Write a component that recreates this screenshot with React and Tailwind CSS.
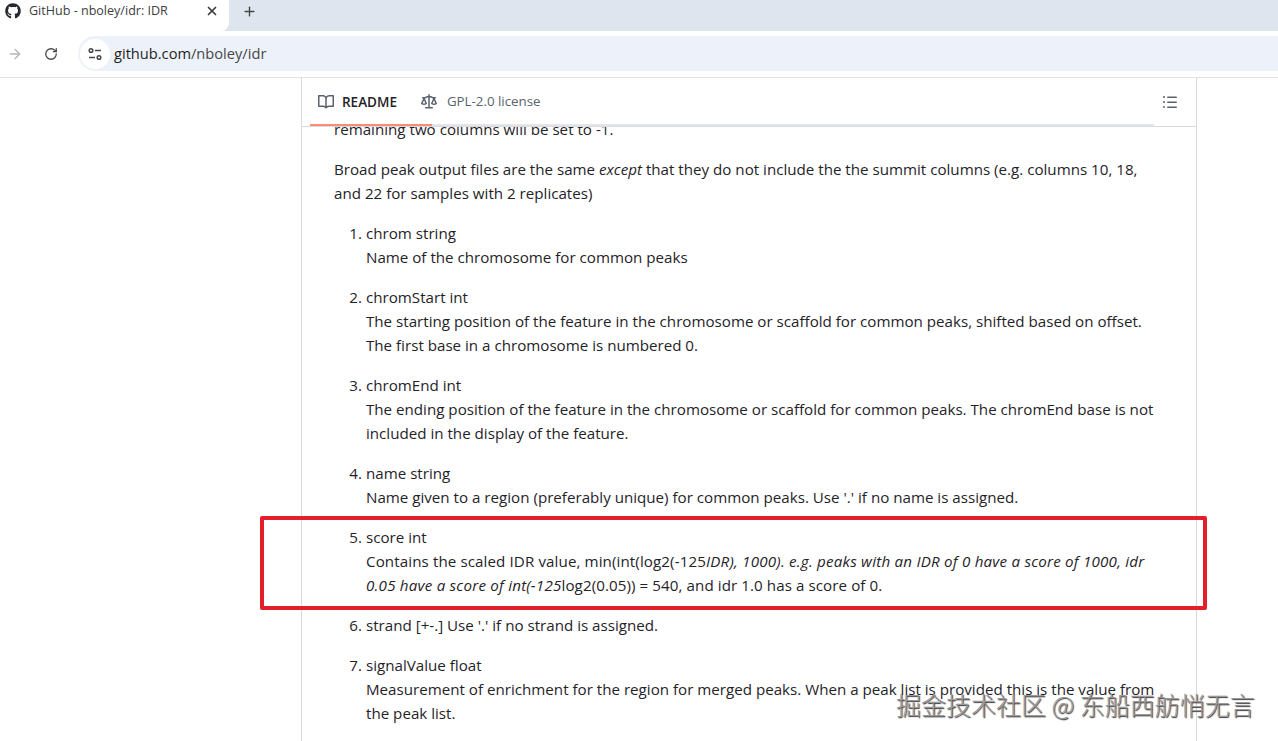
import React from "react";
import { ArrowRight, RotateCw, X, Plus } from "lucide-react";
import { FaGithub } from "react-icons/fa";

const items = [
  { n: "1.", title: "chrom string", body: ["Name of the chromosome for common peaks"] },
  {
    n: "2.",
    title: "chromStart int",
    body: [
      "The starting position of the feature in the chromosome or scaffold for common peaks, shifted based on offset.",
      "The first base in a chromosome is numbered 0.",
    ],
  },
  {
    n: "3.",
    title: "chromEnd int",
    body: [
      "The ending position of the feature in the chromosome or scaffold for common peaks. The chromEnd base is not",
      "included in the display of the feature.",
    ],
  },
  {
    n: "4.",
    title: "name string",
    body: ["Name given to a region (preferably unique) for common peaks. Use '.' if no name is assigned."],
  },
  {
    n: "5.",
    title: "score int",
    body: [
      <>
        <span className="tracking-[0.1px]">Contains the scaled IDR value, min(int(log2(-125</span>
        <em className="tracking-[0.22px]">IDR), 1000). e.g. peaks with an IDR of 0 have a score of 1000, idr</em>
      </>,
      <>
        <em className="tracking-[0.22px]">0.05 have a score of int(-125</em>
        <span className="tracking-[0.08px]">log2(0.05)) = 540, and idr 1.0 has a score of 0.</span>
      </>,
    ],
  },
  { n: "6.", title: "strand [+-.] Use '.' if no strand is assigned.", body: [] },
  {
    n: "7.",
    title: "signalValue float",
    body: [
      "Measurement of enrichment for the region for merged peaks. When a peak list is provided this is the value from",
      "the peak list.",
    ],
  },
];

const Line = ({ children }) => <div className="whitespace-nowrap h-6">{children}</div>;

// octicons used on the readme header
const BookIcon = () => (
  <svg width="16" height="16" viewBox="0 0 16 16" fill="#59636e">
    <path d="M0 1.75A.75.75 0 0 1 .75 1h4.253c1.227 0 2.317.59 3 1.501A3.743 3.743 0 0 1 11.006 1h4.245a.75.75 0 0 1 .75.75v10.5a.75.75 0 0 1-.75.75h-4.507a2.25 2.25 0 0 0-1.591.659l-.622.621a.75.75 0 0 1-1.06 0l-.622-.621A2.25 2.25 0 0 0 5.258 13H.75a.75.75 0 0 1-.75-.75Zm7.251 10.324.004-5.073-.002-2.253A2.25 2.25 0 0 0 5.003 2.5H1.5v9h3.757a3.75 3.75 0 0 1 1.994.574ZM8.755 4.75l-.004 7.322a3.752 3.752 0 0 1 1.992-.572H14.5v-9h-3.495a2.25 2.25 0 0 0-2.25 2.25Z" />
  </svg>
);

const LawIcon = () => (
  <svg width="16" height="16" viewBox="0 0 16 16" fill="#59636e" className="ml-[24px]">
    <path d="M8.75.75V2h.985c.304 0 .603.08.867.231l1.29.736c.038.022.08.033.124.033h2.234a.75.75 0 0 1 0 1.5h-.427l2.111 4.692a.75.75 0 0 1-.154.838l-.53-.53.529.531-.001.002-.002.002-.006.006-.006.005-.01.01-.045.04c-.21.176-.441.327-.686.45C14.556 10.78 13.88 11 13 11a4.498 4.498 0 0 1-2.023-.454 3.544 3.544 0 0 1-.686-.45l-.045-.04-.016-.015-.006-.006-.004-.004v-.001a.75.75 0 0 1-.154-.838L12.178 4.5h-.162c-.305 0-.604-.079-.868-.231l-1.29-.736a.245.245 0 0 0-.124-.033H8.75V13h2.5a.75.75 0 0 1 0 1.5h-6.5a.75.75 0 0 1 0-1.5h2.5V3.5h-.984a.245.245 0 0 0-.124.033l-1.289.737c-.265.15-.564.23-.869.23h-.162l2.112 4.692a.75.75 0 0 1-.154.838l-.53-.53.529.531-.001.002-.002.002-.006.006-.016.015-.045.04c-.21.176-.441.327-.686.45C4.556 10.78 3.88 11 3 11a4.498 4.498 0 0 1-2.023-.454 3.544 3.544 0 0 1-.686-.45l-.045-.04-.016-.015-.006-.006-.004-.004v-.001a.75.75 0 0 1-.154-.838L2.178 4.5H1.75a.75.75 0 0 1 0-1.5h2.234a.249.249 0 0 0 .125-.033l1.288-.737c.265-.15.564-.23.869-.23h.984V.75a.75.75 0 0 1 1.5 0Zm2.945 8.477c.285.135.718.273 1.305.273s1.02-.138 1.305-.273L13 6.327Zm-10 0c.285.135.718.273 1.305.273s1.02-.138 1.305-.273L3 6.327Z" />
  </svg>
);

const OutlineIcon = () => (
  <svg width="16" height="16" viewBox="0 0 16 16" fill="#59636e" className="ml-auto">
    <path d="M5.75 2.5h8.5a.75.75 0 0 1 0 1.5h-8.5a.75.75 0 0 1 0-1.5Zm0 5h8.5a.75.75 0 0 1 0 1.5h-8.5a.75.75 0 0 1 0-1.5Zm0 5h8.5a.75.75 0 0 1 0 1.5h-8.5a.75.75 0 0 1 0-1.5ZM2 14a1 1 0 1 1 0-2 1 1 0 0 1 0 2Zm1-6a1 1 0 1 1-2 0 1 1 0 0 1 2 0ZM2 4a1 1 0 1 1 0-2 1 1 0 0 1 0 2Z" />
  </svg>
);

export default function App() {
  return (
    <div className="relative h-[741px] w-[1278px] overflow-hidden bg-white font-['Open_Sans','Noto_Sans',sans-serif] text-[#1f2328]">
      {/* Tab strip */}
      <div className="flex h-[31px] bg-[#dfe5ee]">
        <div className="flex w-[229px] items-center rounded-br-lg bg-white pb-[9px] pl-[5px] pr-2">
          <FaGithub className="text-[16px] text-[#24292f]" />
          <span className="ml-2 flex-1 whitespace-nowrap text-[12.55px] text-[#3c4043]">GitHub - nboley/idr: IDR</span>
          <X size={14} strokeWidth={3} className="mr-[2px] text-[#3c4043]" />
        </div>
        <div className="flex w-[40px] items-center justify-center pb-[9px]">
          <Plus size={15} strokeWidth={2.2} className="text-[#444746]" />
        </div>
      </div>

      {/* Toolbar */}
      <div className="flex h-[47px] items-center border-b border-[#e3e3e3] bg-white pb-[1px]">
        <div className="flex w-[30px] justify-center">
          <ArrowRight size={16} strokeWidth={2} className="text-[#b4b6b8]" />
        </div>
        <div className="ml-[6px] flex w-[30px] justify-center">
          <RotateCw size={14} strokeWidth={2.2} className="text-[#474747]" />
        </div>
        <div className="ml-[12px] flex h-[35px] flex-1 items-center rounded-l-full bg-[#edf2fa] pl-[2px]">
          <div className="flex h-[30px] w-[30px] items-center justify-center rounded-full bg-white">
            <svg width="16" height="14" viewBox="0 0 16 14" fill="none" stroke="#474747" strokeWidth="1.5">
              <circle cx="4" cy="3.5" r="1.8" />
              <path d="M8 3.5h6" />
              <path d="M2 10.5h6" />
              <circle cx="12" cy="10.5" r="1.8" />
            </svg>
          </div>
          <span className="ml-[4px] text-[14.65px] text-[#1f1f1f]">
            github.com<span className="text-[#474747]">/nboley/idr</span>
          </span>
        </div>
      </div>

      {/* Readme box */}
      <div className="ml-[301px] w-[896px] border-x border-[#d8dbde]">
        <div className="relative flex h-[49px] items-center border-b border-[#d8dbde] pl-[16px] pr-[18px]">
          <BookIcon />
          <span className="ml-[8px] text-[13.5px] font-semibold text-[#1f2328]">README</span>
          <LawIcon />
          <span className="ml-[10px] text-[13.3px] text-[#59636e]">GPL-2.0 license</span>
          <OutlineIcon />
          <div className="absolute bottom-0 left-[8px] h-[2px] w-[122px] bg-[#fd8c73]" />
          <div className="absolute bottom-0 left-[130px] right-[42px] h-[2px] bg-[#e3e5e8]" />
        </div>

        <div className="h-[614px] overflow-hidden pl-[32px] text-[15.15px] leading-6">
          <div className="-mt-[10px]">
            <Line>remaining two columns will be set to -1.</Line>
            <div className="mt-4">
              <Line>
                Broad peak output files are the same <em>except</em> that they do not include the the summit columns (e.g. columns 10, 18,
              </Line>
              <Line>and 22 for samples with 2 replicates)</Line>
            </div>
            <ol className="mt-4 flex flex-col gap-4">
              {items.map((item) => (
                <li key={item.n} className="flex">
                  <span className="w-[32px] pr-[4px] text-right">{item.n}</span>
                  <div>
                    <Line>{item.title}</Line>
                    {item.body.map((line, i) => (
                      <Line key={i}>{line}</Line>
                    ))}
                  </div>
                </li>
              ))}
            </ol>
          </div>
        </div>
      </div>

      {/* Red highlight drawn over the screenshot */}
      <div className="absolute left-[260px] top-[516px] h-[94px] w-[947px] rounded-[2px] border-[4px] border-[#e2202c]" />

      {/* Watermark */}
      <div className="absolute left-[896px] top-[687px] whitespace-nowrap font-['Noto_Sans_CJK_SC',sans-serif] text-[25px] font-light leading-[34px] text-[#9a9a9a] [text-shadow:1px_1px_1px_#333]">
        掘金技术社区 @ 东船西舫悄无言
      </div>
    </div>
  );
}
